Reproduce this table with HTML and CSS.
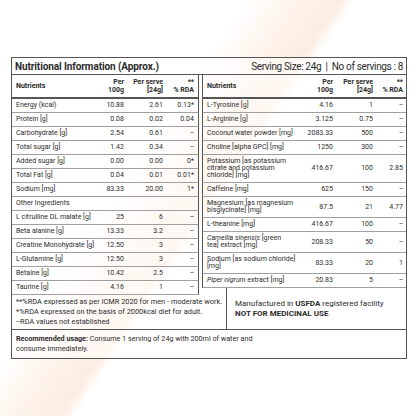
FILE: index.html
```html
<!DOCTYPE html>
<html lang="en">
<head>
    <meta charset="UTF-8">
    <meta name="viewport" content="width=device-width, initial-scale=1.0">
    <title>Nutritional Information</title>
    <link rel="stylesheet" href="styles.css">
</head>
<body>
    <div class="sheet">
        <div class="title-bar">
            <span class="title">Nutritional Information (Approx.)</span>
            <span class="serving">Serving Size: 24g &nbsp;|&nbsp; No of servings : 8</span>
        </div>

        <div class="panels">
            <!-- Left table -->
            <div class="panel panel-left">
                <div class="row head">
                    <span>Nutrients</span>
                    <span class="num">Per<br>100g</span>
                    <span class="num">Per serve<br>[24g]</span>
                    <span class="num">**<br>% RDA</span>
                </div>
                <div class="row"><span>Energy (kcal)</span><span class="num">10.88</span><span class="num">2.61</span><span class="num">0.13*</span></div>
                <div class="row"><span>Protein [g]</span><span class="num">0.08</span><span class="num">0.02</span><span class="num">0.04</span></div>
                <div class="row"><span>Carbohydrate [g]</span><span class="num">2.54</span><span class="num">0.61</span><span class="num">--</span></div>
                <div class="row"><span>Total sugar [g]</span><span class="num">1.42</span><span class="num">0.34</span><span class="num">--</span></div>
                <div class="row"><span>Added sugar [g]</span><span class="num">0.00</span><span class="num">0.00</span><span class="num">0*</span></div>
                <div class="row"><span>Total Fat [g]</span><span class="num">0.04</span><span class="num">0.01</span><span class="num">0.01*</span></div>
                <div class="row"><span>Sodium [mg]</span><span class="num">83.33</span><span class="num">20.00</span><span class="num">1*</span></div>
                <div class="row"><span class="full">Other Ingredients</span></div>
                <div class="row"><span>L citrulline DL malate [g]</span><span class="num">25</span><span class="num">6</span><span class="num">--</span></div>
                <div class="row"><span>Beta alanine [g]</span><span class="num">13.33</span><span class="num">3.2</span><span class="num">--</span></div>
                <div class="row"><span>Creatine Monohydrate [g]</span><span class="num">12.50</span><span class="num">3</span><span class="num">--</span></div>
                <div class="row"><span>L-Glutamine [g]</span><span class="num">12.50</span><span class="num">3</span><span class="num">--</span></div>
                <div class="row"><span>Betaine [g]</span><span class="num">10.42</span><span class="num">2.5</span><span class="num">--</span></div>
                <div class="row"><span>Taurine [g]</span><span class="num">4.16</span><span class="num">1</span><span class="num">--</span></div>

                <div class="notes">
                    <span>**%RDA expressed as per ICMR 2020 for men - moderate work.</span>
                    <span>*%RDA expressed on the basis of 2000kcal diet for adult.</span>
                    <span>--RDA values not established</span>
                </div>
            </div>

            <!-- Right table -->
            <div class="panel panel-right">
                <div class="row head">
                    <span>Nutrients</span>
                    <span class="num">Per<br>100g</span>
                    <span class="num">Per serve<br>[24g]</span>
                    <span class="num">**<br>% RDA</span>
                </div>
                <div class="row"><span>L-Tyrosine [g]</span><span class="num">4.16</span><span class="num">1</span><span class="num">--</span></div>
                <div class="row"><span>L-Arginine [g]</span><span class="num">3.125</span><span class="num">0.75</span><span class="num">--</span></div>
                <div class="row"><span>Coconut water powder [mg]</span><span class="num">2083.33</span><span class="num">500</span><span class="num">--</span></div>
                <div class="row"><span>Choline [alpha GPC] [mg]</span><span class="num">1250</span><span class="num">300</span><span class="num">--</span></div>
                <div class="row"><span>Potassium [as potassium<br>citrate and potassium<br>chloride] [mg]</span><span class="num">416.67</span><span class="num">100</span><span class="num">2.85</span></div>
                <div class="row"><span>Caffeine [mg]</span><span class="num">625</span><span class="num">150</span><span class="num">--</span></div>
                <div class="row"><span>Magnesium [as magnesium<br>bisglycinate] [mg]</span><span class="num">87.5</span><span class="num">21</span><span class="num">4.77</span></div>
                <div class="row"><span>L-theanine [mg]</span><span class="num">416.67</span><span class="num">100</span><span class="num">--</span></div>
                <div class="row"><span><i>Camellia sinensis</i> [green<br>tea] extract [mg]</span><span class="num">208.33</span><span class="num">50</span><span class="num">--</span></div>
                <div class="row"><span>Sodium [as sodium chloride]<br>[mg]</span><span class="num">83.33</span><span class="num">20</span><span class="num">1</span></div>
                <div class="row"><span><i>Piper nigrum</i> extract [mg]</span><span class="num">20.83</span><span class="num">5</span><span class="num">--</span></div>

                <div class="facility">
                    <span>Manufactured in <b>USFDA</b> registered facility</span>
                    <b>NOT FOR MEDICINAL USE</b>
                </div>
            </div>
        </div>

        <div class="usage">
            <span><b>Recommended usage:</b> Consume 1 serving of 24g with 200ml of water and</span>
            <span>consume immediately.</span>
        </div>
    </div>
</body>
</html>
```

FILE: styles.css
```css
* {
    box-sizing: border-box;
}

body {
    margin: 0;
    min-height: 100vh;
    font-family: "Liberation Sans Narrow", Roboto, sans-serif;
    color: #2b2b2b;
    background-color: #ffffff;
    background-image: linear-gradient(124deg, #ffffff 0%, #ffffff 35%, #fdf0e6 45%, #fcede2 49%, #ffffff 51%, #ffffff 100%);
}

.sheet {
    width: 396px;
    margin: 57px 0 0 11px;
    border: 1px solid #555;
    background-color: rgba(255, 255, 255, 0.55);
}

.title-bar {
    display: flex;
    justify-content: space-between;
    align-items: center;
    height: 17px;
    padding: 0 3px;
    border-bottom: 1px solid #555;
    font-size: 10px;
}

.title {
    font-weight: bold;
    letter-spacing: -0.1px;
}

.serving {
    letter-spacing: -0.35px;
}

.panels {
    display: grid;
    grid-template-columns: 187px 204px;
    column-gap: 3px;
}

.panel {
    display: flex;
    flex-direction: column;
}

.row {
    display: grid;
    align-items: center;
    padding: 3px 4px 3px 4px;
    border-bottom: 1px solid #a0a0a0;
    font-size: 7px;
    line-height: 7px;
    white-space: nowrap;
}

.panel-left .row {
    grid-template-columns: minmax(0, 1fr) 36px 39px 31px;
    border-right: 1px solid #555;
}

.panel-right .row {
    grid-template-columns: minmax(0, 1fr) 30px 40px 30px;
    padding-right: 3px;
    border-left: 1px solid #555;
}

.row.head {
    font-weight: bold;
    line-height: 8px;
    padding-top: 3px;
    padding-bottom: 3px;
    border-bottom: 2px solid #555;
}

.num {
    text-align: right;
}

.full {
    grid-column: 1 / -1;
}

.notes {
    display: flex;
    flex-direction: column;
    justify-content: center;
    min-height: 34px;
    flex: 1;
    padding: 2px 0 2px 4px;
    font-size: 7.4px;
    line-height: 10px;
    white-space: nowrap;
}

.facility {
    display: flex;
    flex-direction: column;
    justify-content: center;
    flex: 1;
    margin-left: 24px;
    padding: 0 8px;
    border-left: 1px solid #555;
    font-size: 8px;
    line-height: 10px;
}

.usage {
    display: flex;
    flex-direction: column;
    padding: 4px;
    border-top: 1px solid #555;
    font-size: 7.2px;
    line-height: 10px;
    white-space: nowrap;
}
```
